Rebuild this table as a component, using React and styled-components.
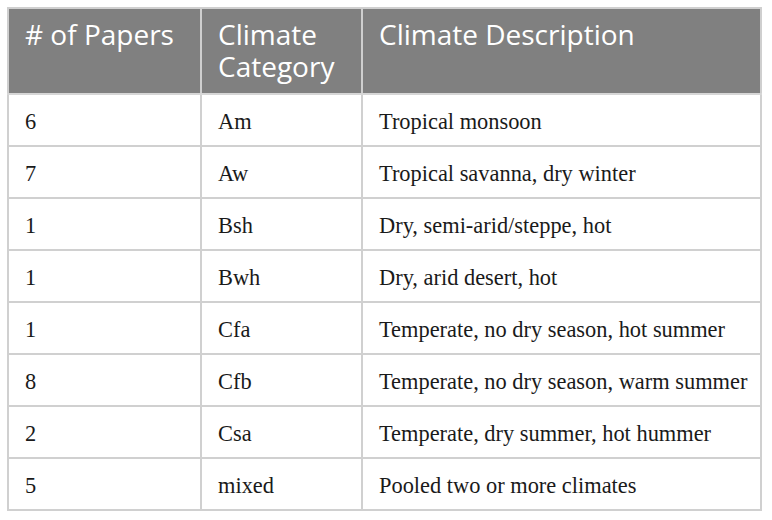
import React from "react";
import styled, { createGlobalStyle } from "styled-components";

const GlobalStyle = createGlobalStyle`
  html, body {
    margin: 0;
    padding: 0;
    background: #fff;
  }
`;

const rows = [
  ["6", "Am", "Tropical monsoon"],
  ["7", "Aw", "Tropical savanna, dry winter"],
  ["1", "Bsh", "Dry, semi-arid/steppe, hot"],
  ["1", "Bwh", "Dry, arid desert, hot"],
  ["1", "Cfa", "Temperate, no dry season, hot summer"],
  ["8", "Cfb", "Temperate, no dry season, warm summer"],
  ["2", "Csa", "Temperate, dry summer, hot hummer"],
  ["5", "mixed", "Pooled two or more climates"],
];

const App = () => {
  return (
    <Page>
      <GlobalStyle />
      <Table>
        <colgroup>
          <Col $w={193} />
          <Col $w={161} />
          <Col $w={399} />
        </colgroup>
        <thead>
          <tr>
            <HeadCell># of Papers</HeadCell>
            <HeadCell>
              Climate
              <br />
              Category
            </HeadCell>
            <HeadCell>Climate Description</HeadCell>
          </tr>
        </thead>
        <tbody>
          {rows.map((r, i) => (
            <tr key={i}>
              {r.map((c, j) => (
                <Cell key={j}>{c}</Cell>
              ))}
            </tr>
          ))}
        </tbody>
      </Table>
    </Page>
  );
};

export default App;

const Page = styled.div`
  width: 772px;
  height: 520px;
  padding: 7px 0 0 7px;
  box-sizing: border-box;
  background: #fff;
`;

const Table = styled.table`
  width: 755px;
  border-collapse: collapse;
  table-layout: fixed;
  border: 2px solid #cfcfcf;
`;

const Col = styled.col`
  width: ${(props) => props.$w}px;
`;

const HeadCell = styled.th`
  height: 86px;
  padding: 9px 16px 0;
  box-sizing: border-box;
  vertical-align: top;
  text-align: left;
  background: #808080;
  color: #fff;
  font-family: "Open Sans", sans-serif;
  font-weight: 400;
  font-size: 28px;
  line-height: 32px;
  border: 2px solid #cfcfcf;
  border-bottom: 2px solid #d6d6d6;
  border-top: 0;
  white-space: nowrap;
`;

const Cell = styled.td`
  height: 52px;
  padding: 3px 16px 0;
  box-sizing: border-box;
  vertical-align: middle;
  text-align: left;
  color: #1a1a1a;
  font-family: "Liberation Serif", serif;
  font-size: 22.4px;
  border: 2px solid #d0d0d0;
  white-space: nowrap;
`;
